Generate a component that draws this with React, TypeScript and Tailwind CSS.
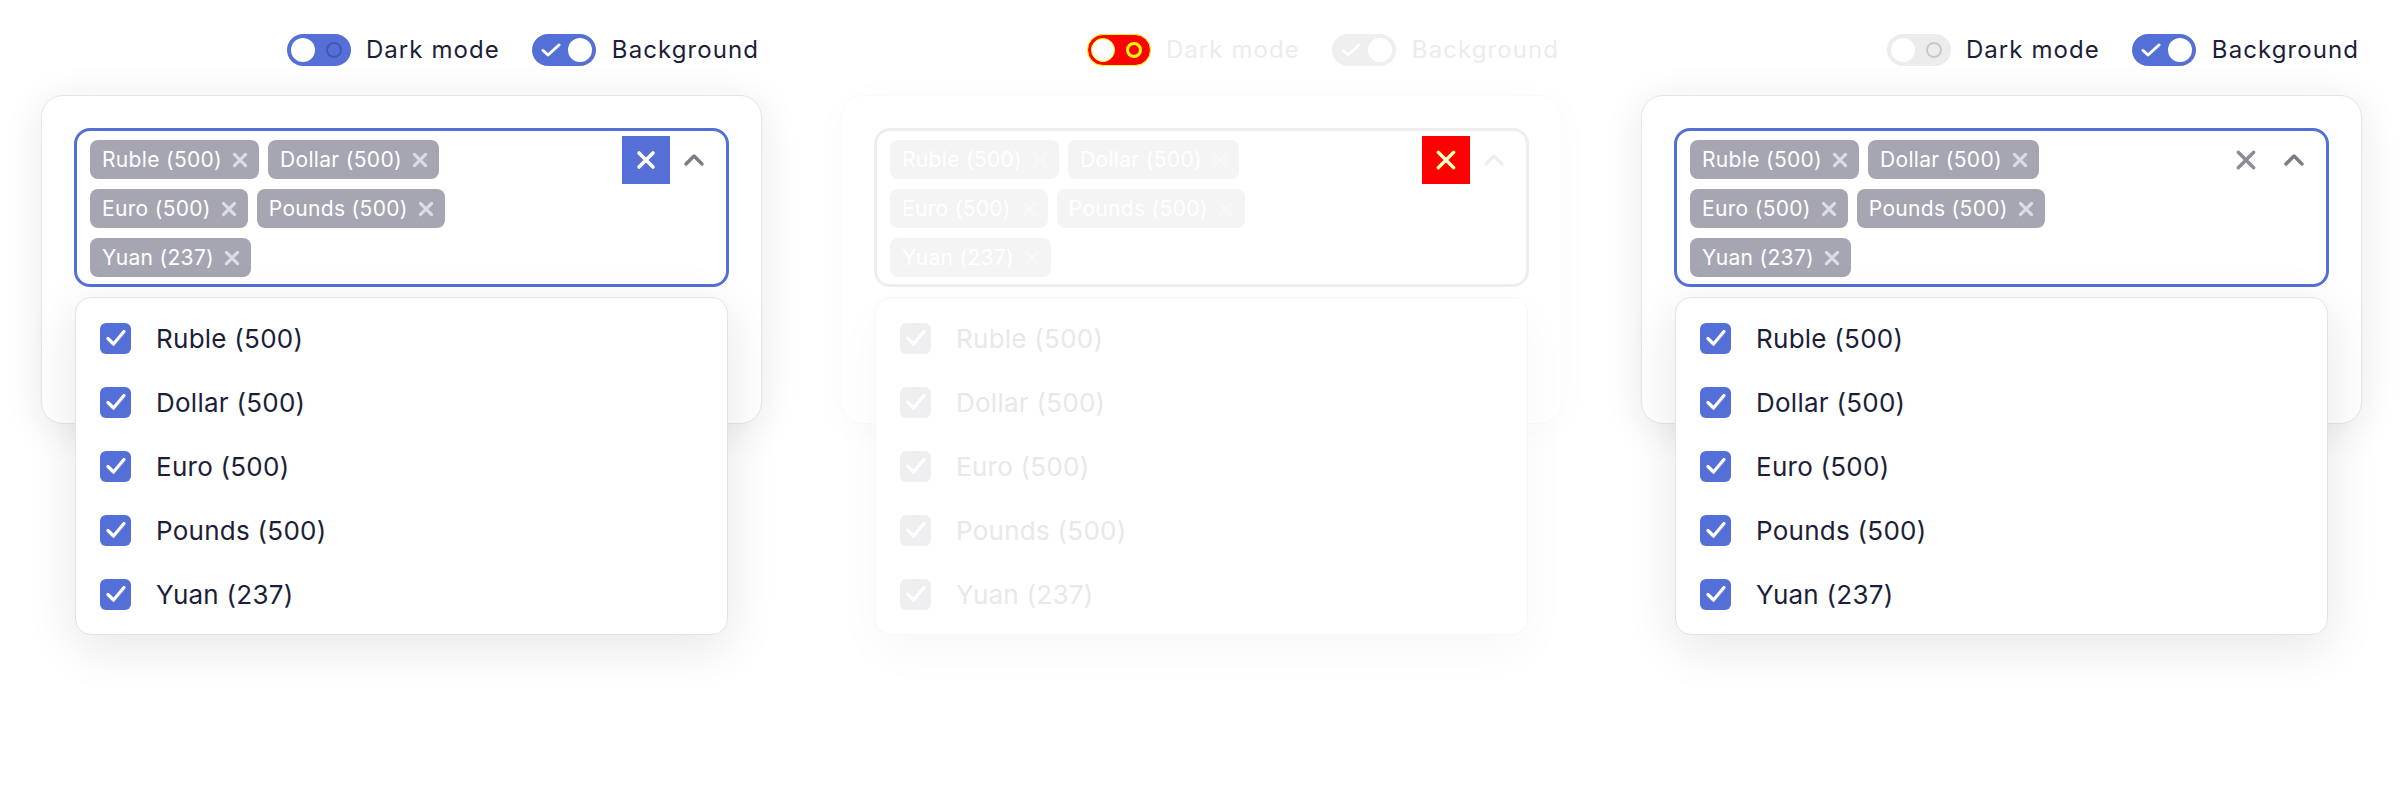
import React from 'react';

type Variant = 'a' | 'b' | 'c';

const items = ['Ruble (500)', 'Dollar (500)', 'Euro (500)', 'Pounds (500)', 'Yuan (237)'];

function XIcon({ size, color, stroke }: { size: number; color: string; stroke: number }) {
  return (
    <svg width={size} height={size} viewBox="0 0 20 20" fill="none">
      <path d="M3 3 L17 17 M17 3 L3 17" stroke={color} strokeWidth={stroke} strokeLinecap="round" />
    </svg>
  );
}

function DarkToggle({ variant }: { variant: Variant }) {
  if (variant === 'b') {
    return (
      <div className="relative w-[64px] h-[32px] rounded-full bg-[#ff0000] border border-[#ffff00] shrink-0">
        <div className="absolute left-[3px] top-[3px] w-[24px] h-[24px] rounded-full bg-white border border-[#ffff00]" />
        <div className="absolute right-[8px] top-[7px] w-[16px] h-[16px] rounded-full border-[3px] border-[#ffff00]" />
      </div>
    );
  }
  const bg = variant === 'a' ? 'bg-[#5470d6]' : 'bg-[#ececec]';
  const ring = variant === 'a' ? 'border-[#4257b8]' : 'border-[#c9c9c9]';
  return (
    <div className={`relative w-[64px] h-[32px] rounded-full shrink-0 ${bg}`}>
      <div className="absolute left-[4px] top-[4px] w-[24px] h-[24px] rounded-full bg-white" />
      <div className={`absolute right-[9px] top-[8px] w-[16px] h-[16px] rounded-full border-2 ${ring}`} />
    </div>
  );
}

function BgToggle({ faint }: { faint: boolean }) {
  const bg = faint ? 'bg-[#efefef]' : 'bg-[#5470d6]';
  return (
    <div className={`relative w-[64px] h-[32px] rounded-full shrink-0 ${bg}`}>
      <svg className="absolute left-[9px] top-[9px]" width="20" height="14" viewBox="0 0 20 14" fill="none">
        <path d="M2 7.5 L7 12 L18 2" stroke="white" strokeWidth="3" strokeLinecap="round" strokeLinejoin="round" />
      </svg>
      <div className="absolute right-[4px] top-[4px] w-[24px] h-[24px] rounded-full bg-white" />
    </div>
  );
}

function Tag({ label, faint }: { label: string; faint: boolean }) {
  return (
    <div
      className={`h-[39px] flex items-center pl-[12px] pr-[11px] gap-[10px] rounded-[8px] ${
        faint ? 'bg-[#f4f4f5]' : 'bg-[#a5a6b1]'
      }`}
    >
      <span className="text-white text-[21px] tracking-[0.015em] leading-none">{label}</span>
      <XIcon size={16} color={faint ? '#f7f7f7' : '#dcdde2'} stroke={3.9} />
    </div>
  );
}

function CheckBox({ faint }: { faint: boolean }) {
  return (
    <div
      className={`w-[31px] h-[31px] rounded-[6px] flex items-center justify-center shrink-0 ${
        faint ? 'bg-[#efeff1]' : 'bg-[#5470d6]'
      }`}
    >
      <svg width="22" height="18" viewBox="0 0 22 18" fill="none">
        <path d="M3 9.5 L8.5 15 L19 2.5" stroke="white" strokeWidth="3.2" strokeLinecap="round" strokeLinejoin="round" />
      </svg>
    </div>
  );
}

function Panel({ variant }: { variant: Variant }) {
  const faint = variant === 'b';
  return (
    <div className="w-[800px] shrink-0 flex flex-col pl-[41px] pr-[38px]">
      <div className="flex justify-end items-center pr-[3px] mt-[34px] h-[32px]">
        <DarkToggle variant={variant} />
        <span className={`ml-[15px] text-[24px] tracking-[0.045em] ${faint ? 'text-[#ececec]' : 'text-[#1c1e38]'}`}>
          Dark mode
        </span>
        <div className="ml-[32px]">
          <BgToggle faint={faint} />
        </div>
        <span className={`ml-[16px] text-[24px] tracking-[0.045em] ${faint ? 'text-[#ececec]' : 'text-[#1c1e38]'}`}>
          Background
        </span>
      </div>
      <div
        className={`mt-[29px] w-[721px] h-[329px] rounded-[22px] bg-white border p-[32px] ${
          faint
            ? 'border-[#fafafa] shadow-[0_6px_40px_rgba(0,0,0,0.025)]'
            : 'border-[#e6e6e6] shadow-[0_6px_40px_rgba(0,0,0,0.09)]'
        }`}
      >
        <div
          className={`relative h-[159px] rounded-[16px] border-[3px] flex ${
            faint ? 'border-[#eeeeee]' : 'border-[#5470d6]'
          }`}
        >
          <div className="w-[480px] pl-[13px] pt-[9px] flex flex-wrap content-start gap-x-[9px] gap-y-[10px]">
            {items.map((t) => (
              <Tag key={t} label={t} faint={faint} />
            ))}
          </div>
          <div className="flex-1 flex items-start justify-end pt-[5px] pr-[21px]">
            {variant === 'a' && (
              <div className="w-[48px] h-[48px] bg-[#5470d6] flex items-center justify-center">
                <XIcon size={20} color="white" stroke={3.6} />
              </div>
            )}
            {variant === 'b' && (
              <div className="w-[48px] h-[48px] bg-[#ff0000] flex items-center justify-center">
                <svg width="22" height="22" viewBox="0 0 20 20" fill="none">
                  <path d="M3 3 L17 17 M17 3 L3 17" stroke="#ffff00" strokeWidth="3.2" strokeLinecap="round" />
                  <path d="M3 3 L17 17 M17 3 L3 17" stroke="white" strokeWidth="2.2" strokeLinecap="round" />
                </svg>
              </div>
            )}
            {variant === 'c' && (
              <div className="w-[48px] h-[48px] flex items-center justify-center">
                <XIcon size={22} color="#8b8c97" stroke={3.2} />
              </div>
            )}
            <div className="w-[22px] h-[48px] ml-[13px] flex items-center justify-center">
              <svg width="22" height="14" viewBox="0 0 22 14" fill="none">
                <path
                  d="M3 11 L11 3 L19 11"
                  stroke={faint ? '#eeeeee' : '#7b7c88'}
                  strokeWidth="3.4"
                  strokeLinecap="round"
                  strokeLinejoin="round"
                />
              </svg>
            </div>
          </div>
          <div
            className={`absolute left-[-2px] right-[-2px] top-[166px] rounded-[16px] bg-white border py-[8px] z-10 ${
              faint
                ? 'border-[#f7f7f7] shadow-[0_16px_50px_rgba(0,0,0,0.03)]'
                : 'border-[#e4e4e4] shadow-[0_12px_50px_rgba(0,0,0,0.1)]'
            }`}
          >
            {items.map((t) => (
              <div key={t} className="h-[64px] flex items-center pl-[24px] gap-[25px]">
                <CheckBox faint={faint} />
                <span
                  className={`text-[26px] tracking-[0.01em] ${faint ? 'text-[#e8e8e9]' : 'text-[#1c1e38]'}`}
                >
                  {t}
                </span>
              </div>
            ))}
          </div>
        </div>
      </div>
    </div>
  );
}

export default function App() {
  return (
    <div className="w-[2400px] h-[800px] bg-white flex font-['Inter','Liberation_Sans',sans-serif] overflow-hidden">
      <Panel variant="a" />
      <Panel variant="b" />
      <Panel variant="c" />
    </div>
  );
}
